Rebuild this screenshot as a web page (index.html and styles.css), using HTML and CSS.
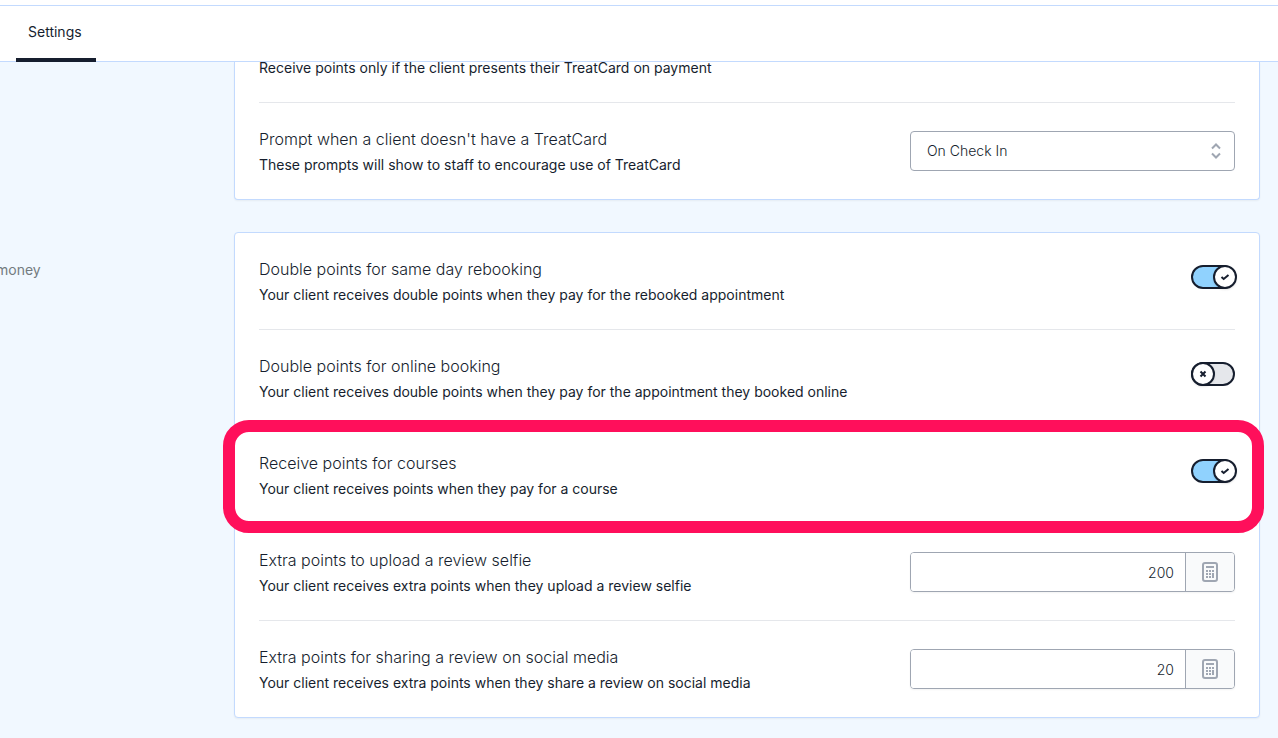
FILE: index.html
```html
<!DOCTYPE html>
<html lang="en">
<head>
    <meta charset="UTF-8">
    <meta name="viewport" content="width=device-width, initial-scale=1.0">
    <title>Settings</title>
    <link rel="stylesheet" href="styles.css">
</head>
<body>
    <nav class="tabs">
        <a class="tab active" href="#settings">Settings</a>
    </nav>

    <main id="settings">
        <section class="section">
            <div class="aside"></div>
            <div class="card card-cut">
                <div class="row row-cut">
                    <p class="desc">Receive points only if the client presents their TreatCard on payment</p>
                </div>
                <div class="row">
                    <div class="text">
                        <label class="title" for="prompt">Prompt when a client doesn't have a TreatCard</label>
                        <p class="desc">These prompts will show to staff to encourage use of TreatCard</p>
                    </div>
                    <div class="select">
                        <select id="prompt">
                            <option>On Check In</option>
                        </select>
                        <svg class="chevrons" viewBox="0 0 20 20" aria-hidden="true"><path d="M6 7.5l4-4 4 4m0 5l-4 4-4-4"/></svg>
                    </div>
                </div>
            </div>
        </section>

        <section class="section">
            <div class="aside">
                <p class="aside-text">money</p>
            </div>
            <div class="card">
                <div class="row">
                    <div class="text">
                        <label class="title" for="rebooking">Double points for same day rebooking</label>
                        <p class="desc">Your client receives double points when they pay for the rebooked appointment</p>
                    </div>
                    <div class="toggle">
                        <input type="checkbox" id="rebooking" checked>
                        <span class="knob">
                            <svg class="on" viewBox="0 0 12 12" aria-hidden="true"><path d="M2.5 6l2.2 2L9.5 4"/></svg>
                            <svg class="off" viewBox="0 0 12 12" aria-hidden="true"><path d="M3.5 3.5l5 5m0-5l-5 5"/></svg>
                        </span>
                    </div>
                </div>
                <div class="row">
                    <div class="text">
                        <label class="title" for="online">Double points for online booking</label>
                        <p class="desc">Your client receives double points when they pay for the appointment they booked online</p>
                    </div>
                    <div class="toggle">
                        <input type="checkbox" id="online">
                        <span class="knob">
                            <svg class="on" viewBox="0 0 12 12" aria-hidden="true"><path d="M2.5 6l2.2 2L9.5 4"/></svg>
                            <svg class="off" viewBox="0 0 12 12" aria-hidden="true"><path d="M3.5 3.5l5 5m0-5l-5 5"/></svg>
                        </span>
                    </div>
                </div>
                <div class="row highlight">
                    <div class="text">
                        <label class="title" for="courses">Receive points for courses</label>
                        <p class="desc">Your client receives points when they pay for a course</p>
                    </div>
                    <div class="toggle">
                        <input type="checkbox" id="courses" checked>
                        <span class="knob">
                            <svg class="on" viewBox="0 0 12 12" aria-hidden="true"><path d="M2.5 6l2.2 2L9.5 4"/></svg>
                            <svg class="off" viewBox="0 0 12 12" aria-hidden="true"><path d="M3.5 3.5l5 5m0-5l-5 5"/></svg>
                        </span>
                    </div>
                </div>
                <div class="row">
                    <div class="text">
                        <label class="title" for="selfie">Extra points to upload a review selfie</label>
                        <p class="desc">Your client receives extra points when they upload a review selfie</p>
                    </div>
                    <div class="number">
                        <input type="text" inputmode="numeric" id="selfie" value="200">
                        <button type="button" aria-label="Calculator">
                            <svg viewBox="0 0 16 20" aria-hidden="true">
                                <rect class="frame" x="1" y="1" width="14" height="18" rx="2"/>
                                <path d="M4 4h8v2H4zM4 8h2v2H4zM7 8h2v2H7zM10 8h2v2h-2zM4 11h2v2H4zM7 11h2v2H7zM4 14h2v2H4zM7 14h2v2H7zM10 11h2v5h-2z"/>
                            </svg>
                        </button>
                    </div>
                </div>
                <div class="row">
                    <div class="text">
                        <label class="title" for="social">Extra points for sharing a review on social media</label>
                        <p class="desc">Your client receives extra points when they share a review on social media</p>
                    </div>
                    <div class="number">
                        <input type="text" inputmode="numeric" id="social" value="20">
                        <button type="button" aria-label="Calculator">
                            <svg viewBox="0 0 16 20" aria-hidden="true">
                                <rect class="frame" x="1" y="1" width="14" height="18" rx="2"/>
                                <path d="M4 4h8v2H4zM4 8h2v2H4zM7 8h2v2H7zM10 8h2v2h-2zM4 11h2v2H4zM7 11h2v2H7zM4 14h2v2H4zM7 14h2v2H7zM10 11h2v5h-2z"/>
                            </svg>
                        </button>
                    </div>
                </div>
            </div>
        </section>
    </main>
</body>
</html>
```

FILE: styles.css
```css
* {
    box-sizing: border-box;
}
body {
    margin: 0;
    min-height: 100vh;
    overflow-x: hidden;
    background: #f1f8ff;
    color: #161e2e;
    font-family: Inter, "Liberation Sans", sans-serif;
    font-size: 14px;
    line-height: 20px;
}
p {
    margin: 0;
}

/* tab bar */
.tabs {
    display: flex;
    padding: 0 16px;
    background: #fff;
    border-top: 5px solid #fff;
    border-bottom: 1px solid #c3dafe;
    box-shadow: inset 0 1px #c3dafe;
}
.tab {
    min-width: 80px;
    padding: 17px 12px 16px;
    margin-bottom: -1px;
    border-bottom: 4px solid transparent;
    color: inherit;
    text-decoration: none;
}
.tab.active {
    border-color: #161e2e;
}

/* sections */
main {
    display: flex;
    flex-direction: column;
    gap: 32px;
    padding: 0 18px 20px 0;
}
.section {
    display: grid;
    grid-template-columns: 234px 1fr;
}
.aside-text {
    margin: 28px 0 0 -4px;
    color: #737b80;
}
.card {
    padding: 0 24px;
    background: #fff;
    border: 1px solid #c3dafe;
    border-radius: 4px;
    box-shadow: 0 1px 2px rgba(0, 0, 0, 0.05);
}
.card-cut {
    border-top: 0;
    border-radius: 0 0 4px 4px;
}
.row {
    display: flex;
    justify-content: space-between;
    padding: 24px 0;
    border-bottom: 1px solid #e5e7eb;
}
.row:last-child {
    border-bottom: 0;
}
.row-cut {
    padding-top: 0;
    margin-top: -4px;
}
.title {
    display: block;
    margin-bottom: 4px;
    font-size: 16px;
    line-height: 24px;
    font-weight: 300;
}

/* ring around one row */
.highlight {
    position: relative;
}
.highlight::after {
    content: "";
    position: absolute;
    inset: -7px -29px -10px -36px;
    border: 12px solid #ff0f5b;
    border-radius: 26px;
    pointer-events: none;
}

/* drop-down */
.select {
    display: grid;
    width: 325px;
    height: 40px;
    margin-top: 4px;
    align-items: center;
}
.select select {
    grid-area: 1 / 1;
    width: 100%;
    height: 40px;
    padding: 0 40px 0 16px;
    appearance: none;
    background: #fff;
    border: 1px solid #9fa6b2;
    border-radius: 4px;
    color: inherit;
    font: inherit;
    font-weight: 300;
}
.chevrons {
    grid-area: 1 / 1;
    justify-self: end;
    width: 20px;
    height: 20px;
    margin-right: 9px;
    fill: none;
    stroke: #9fa6b2;
    stroke-width: 2;
    pointer-events: none;
}

/* toggle */
.toggle {
    display: grid;
    width: 44px;
    height: 24px;
    margin-top: 8px;
}
.toggle input {
    grid-area: 1 / 1;
    width: 44px;
    height: 24px;
    margin: 0;
    appearance: none;
    background: #e5e7eb;
    border: 2px solid #161e2e;
    border-radius: 12px;
}
.toggle input:checked {
    background: #90d2fe;
}
.knob {
    grid-area: 1 / 1;
    display: flex;
    align-items: center;
    justify-content: center;
    width: 24px;
    height: 24px;
    background: #fff;
    border: 2px solid #161e2e;
    border-radius: 50%;
    box-shadow: 0 1px 2px rgba(0, 0, 0, 0.1);
    pointer-events: none;
}
.toggle input:checked + .knob {
    margin-left: 22px;
}
.knob svg {
    width: 12px;
    height: 12px;
    fill: none;
    stroke: #161e2e;
    stroke-width: 2;
}
.knob .on,
.toggle input:checked + .knob .off {
    display: none;
}
.toggle input:checked + .knob .on {
    display: block;
}

/* number field */
.number {
    display: flex;
    width: 325px;
    height: 40px;
    margin-top: 4px;
    border: 1px solid #9fa6b2;
    border-radius: 4px;
    box-shadow: 0 1px 2px rgba(0, 0, 0, 0.05);
    overflow: hidden;
}
.number input {
    flex: 1;
    min-width: 0;
    padding: 2px 11px 0;
    border: 0;
    color: inherit;
    font: inherit;
    font-weight: 300;
    text-align: right;
}
.number button {
    display: flex;
    align-items: center;
    justify-content: center;
    width: 49px;
    padding: 0;
    background: #f9fafb;
    border: 0;
    border-left: 1px solid #9fa6b2;
}
.number svg {
    width: 16px;
    height: 20px;
    fill: #9fa6b2;
}
.number .frame {
    fill: none;
    stroke: #9fa6b2;
    stroke-width: 2;
}
```
